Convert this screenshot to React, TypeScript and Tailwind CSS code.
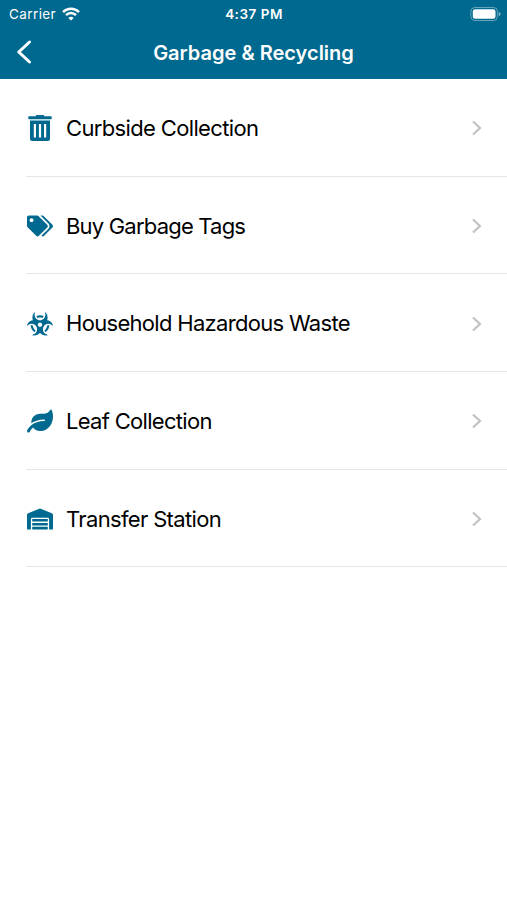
import { FaBiohazard, FaLeaf, FaTags, FaWarehouse } from "react-icons/fa";

function TrashIcon({ className }: { className?: string }) {
  return (
    <svg className={className} viewBox="0 0 26 26" fill="currentColor">
      <path d="M8.7 1.2Q9 0 10 0h6q1 0 1.3 1.2H24q.7 0 .7.7v1.7q0 .7-.7.7H2q-.7 0-.7-.7V1.9q0-.7.7-.7z" />
      <path
        fillRule="evenodd"
        d="M3 5.5h20v18q0 2.500-2.500 2.500h-15Q3 26 3 23.500zM6.800 9v13.500h2.200V9zM11.900 9v13.500h2.200V9zM17 9v13.500h2.200V9z"
      />
    </svg>
  );
}

const items = [
  { label: "Curbside Collection", icon: TrashIcon, tracking: "tracking-[-0.65px]" },
  { label: "Buy Garbage Tags", icon: FaTags, tracking: "tracking-[-0.8px]" },
  { label: "Household Hazardous Waste", icon: FaBiohazard, tracking: "tracking-[-0.69px]" },
  { label: "Leaf Collection", icon: FaLeaf, tracking: "tracking-[-0.7px]" },
  { label: "Transfer Station", icon: FaWarehouse, tracking: "tracking-[-0.65px]" },
];

function StatusBar() {
  return (
    <div className="grid h-[27px] grid-cols-3 items-center text-[13.5px]">
      <div className="flex items-center gap-[6px] pl-[9px]">
        <span className="pt-px tracking-[0.4px]">Carrier</span>
        <svg className="h-[14px] w-[18px]" viewBox="0 0 18 14" fill="none" stroke="white" strokeWidth="2.5">
          <path d="M1 5.100Q4.400 1.700 9 1.700t8 3.400" />
          <path d="M4 8.200Q6.200 6 9 6t5 2.200" />
          <path d="M9 13.600 6.300 10.900Q7.500 9.700 9 9.700t2.700 1.200z" fill="white" stroke="none" />
        </svg>
      </div>
      <div className="pt-px pl-px text-center font-semibold tracking-[0.5px]">4:37 PM</div>
      <div className="flex justify-end pr-[6px]">
        <svg className="h-[14px] w-[31px]" viewBox="0 0 31 14">
          <rect x="0.9" y="0.5" width="26.5" height="13" rx="4" fill="none" stroke="white" strokeOpacity="0.4" />
          <rect x="2.8" y="2.3" width="22.7" height="9.4" rx="2.3" fill="white" />
          <path d="M28.700 4.800q2 .8 2 2.200t-2 2.200z" fill="white" fillOpacity="0.5" />
        </svg>
      </div>
    </div>
  );
}

export default function App() {
  return (
    <div className="h-[900px] bg-white font-['Inter',sans-serif]">
      <header className="h-[79px] bg-[#00698f] text-white">
        <StatusBar />
        <div className="grid h-[50px] grid-cols-[44px_1fr_44px] items-center">
          <svg className="ml-[16px] h-6 w-4" viewBox="0 0 16 24" fill="none" stroke="white" strokeWidth="3">
            <path d="M13.500 2 2.800 12l10.700 10" strokeLinecap="round" strokeLinejoin="round" />
          </svg>
          <h1 className="pt-px text-center text-[20px] font-semibold">Garbage &amp; Recycling</h1>
        </div>
      </header>
      <ul>
        {items.map((item) => (
          <li
            key={item.label}
            className="ml-[26px] flex h-[97.7px] items-center border-b border-[#e6e6e6] pt-[2px] pr-[24px] pl-px"
          >
            <item.icon className="mr-[13px] size-[26px] shrink-0 text-[#00698f]" />
            <span className={`flex-1 text-[22px] text-black ${item.tracking}`}>{item.label}</span>
            <svg className="h-4 w-3" viewBox="0 0 12 16" fill="none" stroke="#c2c2c4" strokeWidth="2.2">
              <path d="M2 1.500 9 8l-7 6.500" />
            </svg>
          </li>
        ))}
      </ul>
    </div>
  );
}
